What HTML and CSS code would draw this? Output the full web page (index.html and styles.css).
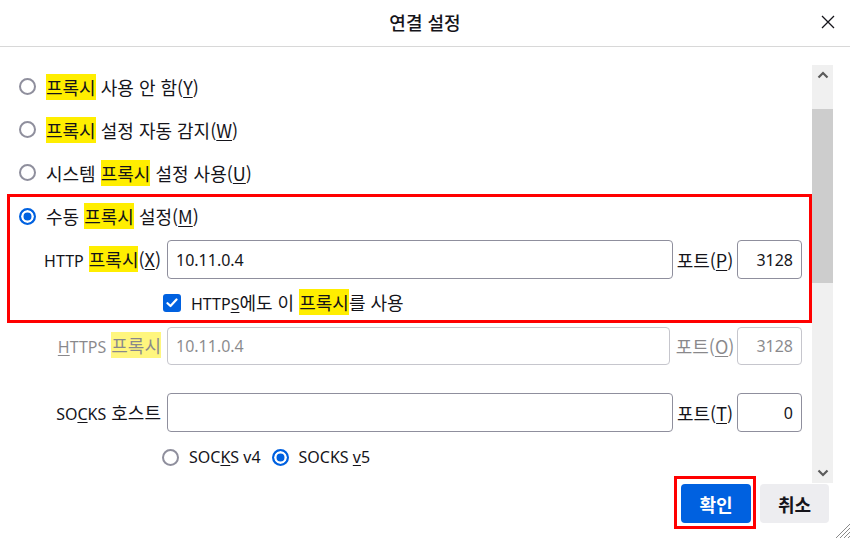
FILE: index.html
```html
<!DOCTYPE html>
<html lang="ko">
<head>
<meta charset="utf-8">
<title>연결 설정</title>
<link rel="stylesheet" href="styles.css">
</head>
<body>
<div class="dialog">
  <header class="titlebar">
    <h1 class="title">연결 설정</h1>
    <button class="close" aria-label="닫기">
      <svg width="14" height="14" viewBox="0 0 14 14"><path d="M1 1L13 13M13 1L1 13" stroke="#15141a" stroke-width="1.3" fill="none"/></svg>
    </button>
  </header>
  <div class="body">
    <div class="pane">
      <label class="radio-row"><span class="radio"></span><span><mark class="hl">프록시</mark> 사용 안 함(<u>Y</u>)</span></label>
      <label class="radio-row"><span class="radio"></span><span><mark class="hl">프록시</mark> 설정 자동 감지(<u>W</u>)</span></label>
      <label class="radio-row"><span class="radio"></span><span>시스템 <mark class="hl">프록시</mark> 설정 사용(<u>U</u>)</span></label>
      <div class="manual">
        <label class="radio-row first"><span class="radio checked"></span><span>수동 <mark class="hl">프록시</mark> 설정(<u>M</u>)</span></label>
        <div class="field-row">
          <span class="flabel inbox"><span class="en">HTTP</span> <mark class="hl">프록시</mark>(<u>X</u>)</span>
          <span class="input wide">10.11.0.4</span>
          <span class="plabel">포트(<u>P</u>)</span>
          <span class="input port">3128</span>
        </div>
        <div class="check-row">
          <span class="checkbox"><svg width="12" height="10" viewBox="0 0 12 10"><path d="M1.5 5.2L4.5 8L10.5 1.5" stroke="#fff" stroke-width="2.2" fill="none" stroke-linecap="round" stroke-linejoin="round"/></svg></span>
          <span><span class="en">HTTP<u>S</u></span>에도 이 <mark class="hl">프록시</mark>를 사용</span>
        </div>
      </div>
      <div class="field-row disabled">
        <span class="flabel"><span class="en"><u>H</u>TTPS</span> <mark class="hl">프록시</mark></span>
        <span class="input wide short">10.11.0.4</span>
        <span class="plabel">포트(<u>O</u>)</span>
        <span class="input port">3128</span>
      </div>
      <div class="field-row socks">
        <span class="flabel"><span class="en">SO<u>C</u>KS</span> 호스트</span>
        <span class="input wide"></span>
        <span class="plabel">포트(<u>T</u>)</span>
        <span class="input port">0</span>
      </div>
      <div class="socks-ver">
        <label class="ver"><span class="radio"></span><span class="en">SOC<u>K</u>S v4</span></label>
        <label class="ver"><span class="radio checked"></span><span class="en">SOCKS <u>v</u>5</span></label>
      </div>
    </div>
    <div class="scrollbar">
      <svg class="arrow" width="12" height="8" viewBox="0 0 12 8"><path d="M1.5 6.5L6 2L10.5 6.5" stroke="#5b5b5b" stroke-width="2.2" fill="none"/></svg>
      <div class="thumb"></div>
      <div class="track-fill"></div>
      <svg class="arrow" width="12" height="8" viewBox="0 0 12 8"><path d="M1.5 1.5L6 6L10.5 1.5" stroke="#5b5b5b" stroke-width="2.2" fill="none"/></svg>
    </div>
  </div>
  <footer class="footer">
    <span class="focus-mark"><button class="btn primary">확인</button></span>
    <button class="btn">취소</button>
    <svg class="grip" width="16" height="16" viewBox="0 0 16 16"><path d="M16 2L2 16M16 6L6 16M16 10L10 16M16 14L14 16" stroke="#8a8a8a" stroke-width="1" fill="none"/></svg>
  </footer>
</div>
</body>
</html>
```

FILE: styles.css
```css
* { box-sizing: border-box; }
html, body { margin: 0; padding: 0; background: #fff; }
body {
  font-family: "Noto Sans CJK KR", "Noto Sans", sans-serif;
  font-size: 18px;
  color: #15141a;
}
.en {
  font-family: "Noto Sans", "Noto Sans CJK KR", sans-serif;
  font-size: 16px;
}
.dialog {
  width: 850px;
  height: 538px;
  display: flex;
  flex-direction: column;
  position: relative;
  overflow: hidden;
}
.titlebar {
  height: 47px;
  border-bottom: 1px solid #d8d8d8;
  display: flex;
  align-items: center;
  justify-content: center;
  position: relative;
}
.title {
  margin: 0;
  font-size: 18px;
  font-weight: 500;
  line-height: 22px;
  margin-top: -2px;
}
.close {
  position: absolute;
  right: 14px;
  top: 14px;
  width: 16px;
  height: 16px;
  border: 0;
  padding: 0;
  background: transparent;
  display: flex;
  align-items: center;
  justify-content: center;
}
.body {
  height: 437px;
  display: flex;
}
.pane {
  width: 812px;
  padding-top: 18px;
  display: flex;
  flex-direction: column;
}
mark.hl {
  background: #ffee00;
  color: inherit;
  padding: 0;
}
u { text-underline-offset: 2px; text-decoration-thickness: 1px; }
.radio-row {
  height: 43px;
  display: flex;
  align-items: center;
  gap: 10px;
  padding-left: 19px;
  line-height: 22px;
}
.radio {
  width: 17px;
  height: 17px;
  border-radius: 50%;
  border: 2px solid #8f8f9d;
  flex: none;
}
.radio.checked {
  border-color: #0061e0;
  background: #0061e0;
  box-shadow: inset 0 0 0 2.5px #fff;
}
.manual {
  margin-left: 7px;
  border: 3px solid #ff0000;
  padding-bottom: 8px;
}
.manual .radio-row.first {
  height: 38px;
  padding-left: 9px;
}
.field-row {
  display: flex;
  align-items: center;
  height: 39px;
  margin-top: 5px;
  line-height: 22px;
}
.flabel {
  width: 161px;
  text-align: right;
  white-space: nowrap;
  margin-right: 6px;
}
.flabel.inbox { width: 151px; }
.input {
  height: 39px;
  border: 1px solid #8f8f9d;
  border-radius: 4px;
  display: flex;
  align-items: center;
  padding: 0 8px;
  background: #fff;
  font-family: "Noto Sans", sans-serif;
  font-size: 16px;
}
.input.wide { width: 506px; }
.input.wide.short { width: 503px; margin-right: 3px; }
.plabel {
  width: 64px;
  text-align: center;
  white-space: nowrap;
}
.input.port {
  width: 65px;
  justify-content: flex-end;
}
.check-row {
  display: flex;
  align-items: center;
  gap: 10px;
  margin-top: 15px;
  padding-left: 153px;
  height: 18px;
  line-height: 22px;
}
.checkbox {
  width: 18px;
  height: 18px;
  border-radius: 3px;
  background: #0061e0;
  display: flex;
  align-items: center;
  justify-content: center;
  flex: none;
}
.disabled { opacity: 0.5; margin-top: 4px; height: 38px; }
.disabled .input { height: 38px; }
.field-row.socks { margin-top: 28px; }
.socks-ver {
  display: flex;
  align-items: center;
  gap: 11px;
  padding-left: 162px;
  margin-top: 16px;
  height: 18px;
  line-height: 22px;
}
.ver { display: flex; align-items: center; gap: 10px; }
.scrollbar {
  width: 21px;
  margin-top: 18px;
  height: 418px;
  background: #f0f0f0;
  display: flex;
  flex-direction: column;
  align-items: center;
}
.scrollbar .arrow { flex: none; margin: 6px 0; }
.thumb {
  width: 21px;
  height: 174px;
  margin-top: 24px;
  background: #cdcdcd;
}
.track-fill { flex: 1; }
.footer {
  flex: 1;
  display: flex;
  justify-content: flex-end;
  align-items: flex-start;
  gap: 9px;
  padding-right: 21px;
  position: relative;
}
.btn {
  height: 39px;
  width: 69px;
  border: 0;
  border-radius: 4px;
  background: #ededf0;
  color: #15141a;
  font-family: "Noto Sans CJK KR", "Noto Sans", sans-serif;
  font-size: 18px;
  font-weight: 700;
  padding: 0;
}
.btn.primary {
  width: 70px;
  background: #0061e0;
  color: #fff;
}
.focus-mark { position: relative; display: flex; }
.focus-mark::after {
  content: "";
  position: absolute;
  left: -7px;
  right: -5px;
  top: -8px;
  bottom: -6px;
  border: 3px solid #ff0000;
}
.grip {
  position: absolute;
  right: 0;
  bottom: 0;
}
```
